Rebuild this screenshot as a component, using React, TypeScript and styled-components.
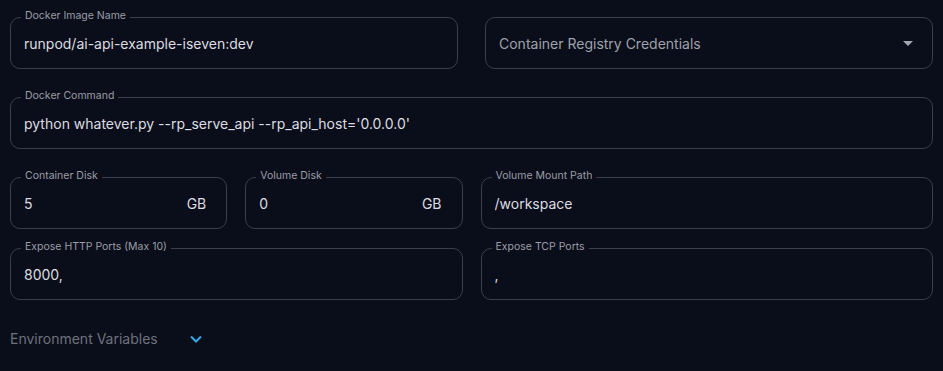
import styled, { createGlobalStyle } from "styled-components"

const GlobalStyle = createGlobalStyle`
  html, body {
    margin: 0;
    background: #0a0d1a;
  }
  body {
    font-family: Inter, "Noto Sans", sans-serif;
  }
`

const Page = styled.div`
  width: 943px;
  height: 371px;
  box-sizing: border-box;
  padding: 17px 10px 0 10px;
  background: #0a0d1a;
  display: flex;
  flex-direction: column;
`
const Row = styled.div<{ $cols: number; $gap: number; $mb: number }>`
  display: grid;
  grid-template-columns: repeat(${(p) => p.$cols}, minmax(0, 1fr));
  column-gap: ${(p) => p.$gap}px;
  margin-bottom: ${(p) => p.$mb}px;
  min-width: 0;
`
const Box = styled.div`
  position: relative;
  height: 52px;
  box-sizing: border-box;
  border: 1px solid #3c3f4a;
  border-radius: 10px;
  display: flex;
  align-items: center;
  padding: 0 20px 0 13px;
  min-width: 0;
`
const Label = styled.span`
  position: absolute;
  left: 10px;
  top: -9px;
  padding: 0 4px;
  background: #0a0d1a;
  color: #9b9ea6;
  font-size: 10.5px;
  line-height: 14px;
  white-space: nowrap;
`
const Input = styled.input`
  flex: 1;
  min-width: 0;
  width: 0;
  background: transparent;
  border: none;
  outline: none;
  padding: 0;
  color: #dcdde0;
  font-family: Inter, "Noto Sans", sans-serif;
  font-size: 14px;
`
const Suffix = styled.span`
  color: #dcdde0;
  font-size: 14px;
`
const Placeholder = styled.span`
  flex: 1;
  color: #9fa2a9;
  font-size: 14px;
`
const Footer = styled.div`
  display: flex;
  align-items: center;
  margin-top: 30px;
  gap: 31px;
  color: #6e727c;
  font-size: 14px;
`

type FieldProps = { label?: string; value: string; suffix?: string }

function Field({ label, value, suffix }: FieldProps) {
  return (
    <Box>
      {label && <Label>{label}</Label>}
      <Input readOnly defaultValue={value} />
      {suffix && <Suffix>{suffix}</Suffix>}
    </Box>
  )
}

export default function App() {
  return (
    <Page>
      <GlobalStyle />
      <Row $cols={2} $gap={27} $mb={28}>
        <Field label="Docker Image Name" value="runpod/ai-api-example-iseven:dev" />
        <Box>
          <Placeholder>Container Registry Credentials</Placeholder>
          <svg width="24" height="24" viewBox="0 0 24 24" style={{ marginRight: -8 }}>
            <path d="M7 10l5 5 5-5z" fill="#a3a6ad" />
          </svg>
        </Box>
      </Row>
      <Row $cols={1} $gap={0} $mb={28}>
        <Field label="Docker Command" value="python whatever.py --rp_serve_api --rp_api_host='0.0.0.0'" />
      </Row>
      <Row $cols={2} $gap={18} $mb={19}>
        <Row $cols={2} $gap={18} $mb={0}>
          <Field label="Container Disk" value="5" suffix="GB" />
          <Field label="Volume Disk" value="0" suffix="GB" />
        </Row>
        <Field label="Volume Mount Path" value="/workspace" />
      </Row>
      <Row $cols={2} $gap={18} $mb={0}>
        <Field label="Expose HTTP Ports (Max 10)" value="8000," />
        <Field label="Expose TCP Ports" value="," />
      </Row>
      <Footer>
        <span>Environment Variables</span>
        <svg width="14" height="10" viewBox="0 0 14 10">
          <polyline points="2,2.5 7,7.5 12,2.5" fill="none" stroke="#38a9e8" strokeWidth="2" />
        </svg>
      </Footer>
    </Page>
  )
}
